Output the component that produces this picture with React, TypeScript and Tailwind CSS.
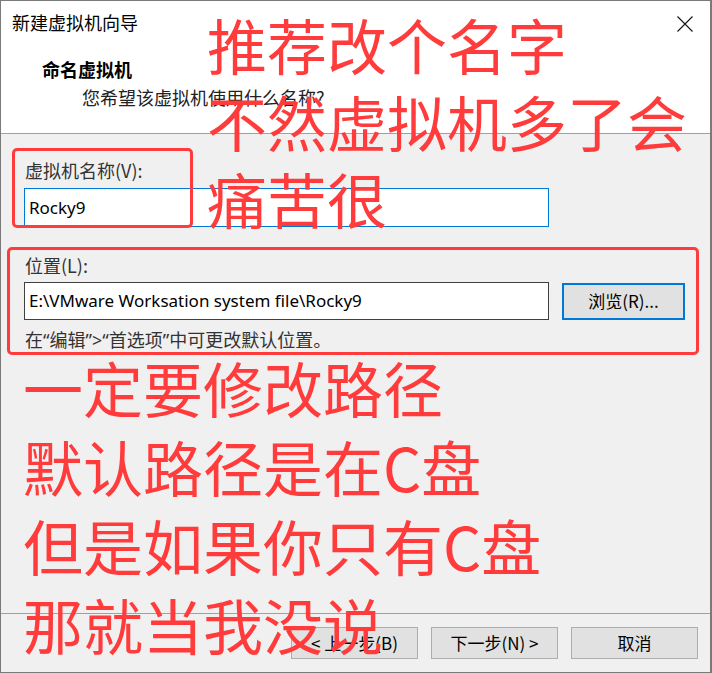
import React from "react";

const ui = { fontFamily: '"Noto Sans", "Noto Sans CJK SC", sans-serif' };
const cjk = { fontFamily: '"Noto Sans CJK SC", "Noto Sans", sans-serif' };

function Btn({ children, className = "" }: { children: React.ReactNode; className?: string }) {
  return (
    <div
      className={
        "h-[32px] w-[127px] flex items-center justify-center bg-[#e1e1e1] border border-[#adadad] text-[17px] text-black " +
        className
      }
      style={cjk}
    >
      {children}
    </div>
  );
}

export default function App() {
  return (
    <div
      className="relative w-[712px] h-[673px] bg-[#f0f0f0] border-l border-t border-b border-r-2 border-[#7a7a7a] flex flex-col overflow-hidden"
      style={ui}
    >
      {/* header */}
      <div className="h-[133px] shrink-0 bg-white border-b border-[#a0a0a0] flex flex-col">
        <div className="flex justify-between items-start pl-[11px] pr-[17px] pt-[9px]">
          <div className="text-[18px] leading-[24px] text-black" style={cjk}>
            新建虚拟机向导
          </div>
          <svg width="16" height="16" viewBox="0 0 16 16" className="mt-[6px]">
            <path d="M0.5 0.5 L15.5 15.5 M15.5 0.5 L0.5 15.5" stroke="#111" strokeWidth="1.1" fill="none" />
          </svg>
        </div>
        <div className="pl-[41px] mt-[23px] text-[18px] leading-[24px] font-bold text-black" style={cjk}>
          命名虚拟机
        </div>
        <div className="pl-[81px] mt-[4px] text-[18px] leading-[24px] text-[#222]" style={cjk}>
          您希望该虚拟机使用什么名称?
        </div>
      </div>

      {/* body */}
      <div className="flex-1 flex flex-col pl-[23px]">
        <div className="mt-[24px] pl-[1px] text-[18px] leading-[24px] text-[#333]" style={cjk}>
          虚拟机名称(V):
        </div>
        <div className="mt-[6px] w-[525px] h-[39px] bg-white border border-[#0078d7] flex items-center pl-[4px] text-[17px] text-black">
          Rocky9
        </div>
        <div className="mt-[26px] pl-[1px] text-[18px] leading-[24px] text-[#333]" style={cjk}>
          位置(L):
        </div>
        <div className="mt-[5px] flex gap-[13px] items-center">
          <div className="w-[525px] h-[38px] bg-white border border-[#404040] flex items-center pl-[4px] text-[17px] text-black whitespace-nowrap overflow-hidden">
            E:\VMware Worksation system file\Rocky9
          </div>
          <div
            className="w-[123px] h-[37px] bg-[#e1e1e1] border-2 border-[#0078d7] flex items-center justify-center text-[17px] text-black"
            style={cjk}
          >
            浏览(R)...
          </div>
        </div>
        <div className="mt-[8px] pl-[1px] text-[18px] leading-[24px] text-[#333]" style={ui}>
          在“编辑”&gt;“首选项”中可更改默认位置。
        </div>
      </div>

      {/* footer */}
      <div className="h-[59px] shrink-0 border-t border-[#a0a0a0] flex justify-end items-start gap-[13px] pt-[13px] pr-[12px]">
        <Btn>&lt; 上一步(B)</Btn>
        <Btn>下一步(N) &gt;</Btn>
        <Btn>取消</Btn>
      </div>

      {/* annotations */}
      <div className="absolute left-[11px] top-[147px] w-[181px] h-[80px] border-[3px] border-[#ff3b3b] rounded-[5px] pointer-events-none" />
      <div className="absolute left-[6px] top-[246px] w-[692px] h-[108px] border-[3px] border-[#ff3b3b] rounded-[5px] pointer-events-none" />

      <div
        className="absolute left-[206px] top-[4px] text-[60px] leading-[77px] text-[#ff3b3b] whitespace-nowrap pointer-events-none"
        style={cjk}
      >
        <div>推荐改个名字</div>
        <div>不然虚拟机多了会</div>
        <div>痛苦很</div>
      </div>
      <div
        className="absolute left-[22px] top-[346px] text-[60px] leading-[79px] text-[#ff3b3b] whitespace-nowrap pointer-events-none"
        style={cjk}
      >
        <div>一定要修改路径</div>
        <div>默认路径是在C盘</div>
        <div>但是如果你只有C盘</div>
        <div>那就当我没说</div>
      </div>
    </div>
  );
}
